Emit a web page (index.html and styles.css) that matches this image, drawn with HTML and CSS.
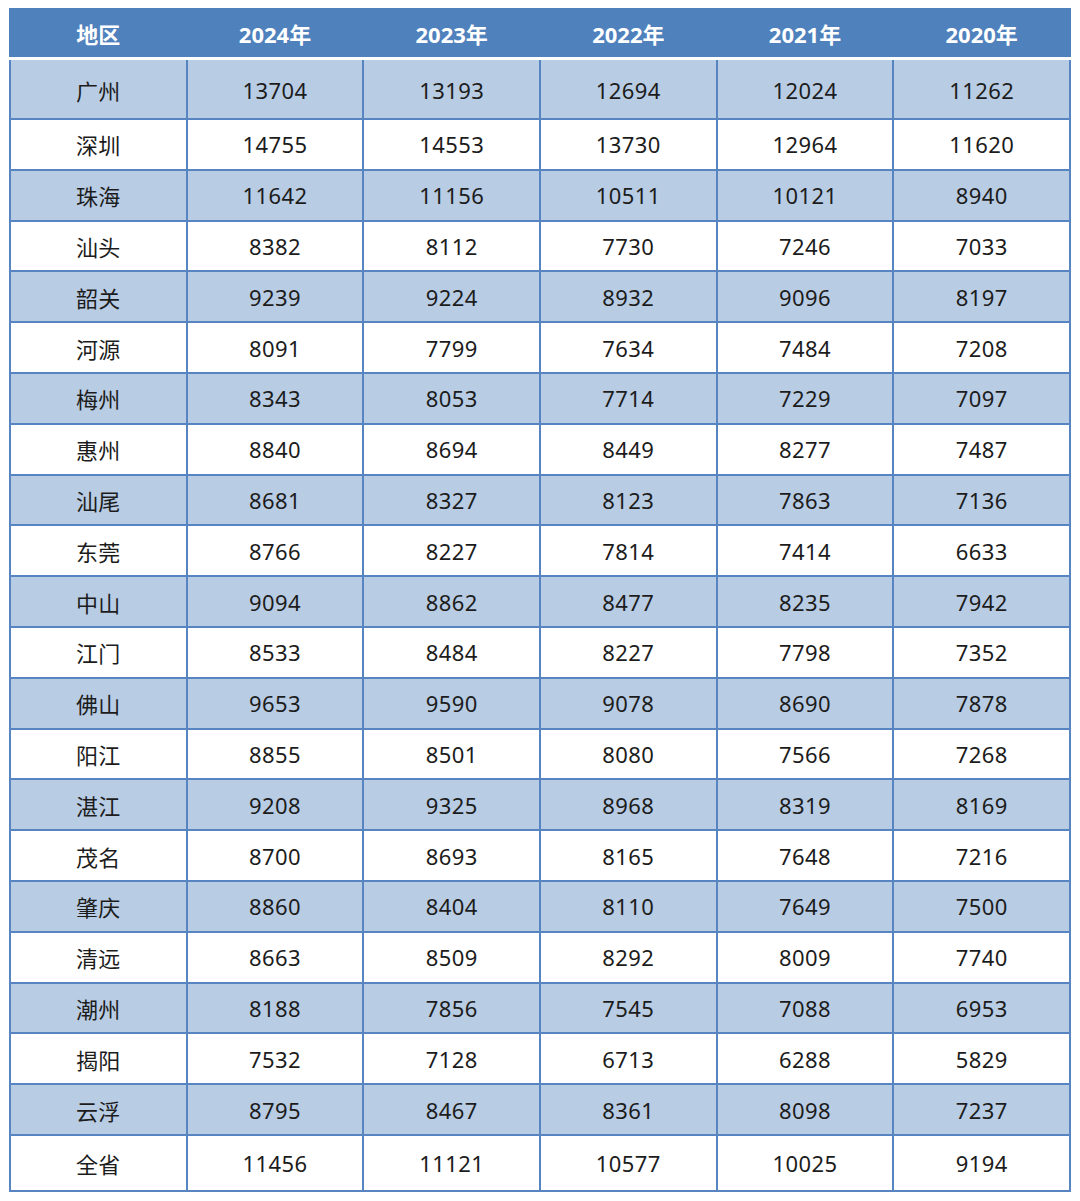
FILE: index.html
```html
<!DOCTYPE html>
<html lang="zh">
<head>
<meta charset="utf-8">
<link rel="stylesheet" href="styles.css">
</head>
<body>
<div class="page">
  <div class="head">
    <div>地区</div><div>2024年</div><div>2023年</div><div>2022年</div><div>2021年</div><div>2020年</div>
  </div>
  <div class="grid">
    <div class="a first">广州</div><div class="a first">13704</div><div class="a first">13193</div><div class="a first">12694</div><div class="a first">12024</div><div class="a first">11262</div>
    <div>深圳</div><div>14755</div><div>14553</div><div>13730</div><div>12964</div><div>11620</div>
    <div class="a">珠海</div><div class="a">11642</div><div class="a">11156</div><div class="a">10511</div><div class="a">10121</div><div class="a">8940</div>
    <div>汕头</div><div>8382</div><div>8112</div><div>7730</div><div>7246</div><div>7033</div>
    <div class="a">韶关</div><div class="a">9239</div><div class="a">9224</div><div class="a">8932</div><div class="a">9096</div><div class="a">8197</div>
    <div>河源</div><div>8091</div><div>7799</div><div>7634</div><div>7484</div><div>7208</div>
    <div class="a">梅州</div><div class="a">8343</div><div class="a">8053</div><div class="a">7714</div><div class="a">7229</div><div class="a">7097</div>
    <div>惠州</div><div>8840</div><div>8694</div><div>8449</div><div>8277</div><div>7487</div>
    <div class="a">汕尾</div><div class="a">8681</div><div class="a">8327</div><div class="a">8123</div><div class="a">7863</div><div class="a">7136</div>
    <div>东莞</div><div>8766</div><div>8227</div><div>7814</div><div>7414</div><div>6633</div>
    <div class="a">中山</div><div class="a">9094</div><div class="a">8862</div><div class="a">8477</div><div class="a">8235</div><div class="a">7942</div>
    <div>江门</div><div>8533</div><div>8484</div><div>8227</div><div>7798</div><div>7352</div>
    <div class="a">佛山</div><div class="a">9653</div><div class="a">9590</div><div class="a">9078</div><div class="a">8690</div><div class="a">7878</div>
    <div>阳江</div><div>8855</div><div>8501</div><div>8080</div><div>7566</div><div>7268</div>
    <div class="a">湛江</div><div class="a">9208</div><div class="a">9325</div><div class="a">8968</div><div class="a">8319</div><div class="a">8169</div>
    <div>茂名</div><div>8700</div><div>8693</div><div>8165</div><div>7648</div><div>7216</div>
    <div class="a">肇庆</div><div class="a">8860</div><div class="a">8404</div><div class="a">8110</div><div class="a">7649</div><div class="a">7500</div>
    <div>清远</div><div>8663</div><div>8509</div><div>8292</div><div>8009</div><div>7740</div>
    <div class="a">潮州</div><div class="a">8188</div><div class="a">7856</div><div class="a">7545</div><div class="a">7088</div><div class="a">6953</div>
    <div>揭阳</div><div>7532</div><div>7128</div><div>6713</div><div>6288</div><div>5829</div>
    <div class="a">云浮</div><div class="a">8795</div><div class="a">8467</div><div class="a">8361</div><div class="a">8098</div><div class="a">7237</div>
    <div>全省</div><div>11456</div><div>11121</div><div>10577</div><div>10025</div><div>9194</div>
  </div>
</div>
</body>
</html>
```

FILE: styles.css
```css
html, body {
  margin: 0;
  padding: 0;
  background: #ffffff;
}
.page {
  padding: 8px 8px 0 9px;
  font-family: "Noto Sans", "Noto Sans CJK SC", sans-serif;
}
.head {
  width: 1062px;
  height: 49px;
  background: #4f81bd;
  display: grid;
  grid-template-columns: repeat(6, 1fr);
  padding: 0 2px;
  box-sizing: border-box;
  column-gap: 2px;
  color: #ffffff;
  font-weight: 700;
  font-size: 22px;
  margin-bottom: 3px;
}
.head > div {
  display: flex;
  align-items: center;
  justify-content: center;
}
.grid {
  width: 1062px;
  box-sizing: border-box;
  display: grid;
  grid-template-columns: repeat(6, 1fr);
  grid-template-rows: 58px repeat(20, 48.8px) 54px;
  gap: 2px;
  padding: 0 2px 2px 2px;
  background: #5785c2;
  font-size: 22px;
  color: #1c1c1c;
  letter-spacing: 0.4px;
}
.grid > div {
  background: #ffffff;
  display: flex;
  align-items: center;
  justify-content: center;
}
.grid > div.a {
  background: #b8cce4;
}
.grid > div.first {
  padding-top: 2px;
}
```
